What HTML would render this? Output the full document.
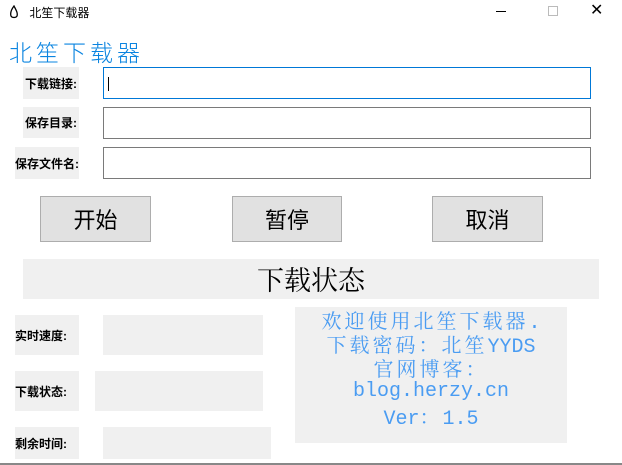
<!DOCTYPE html>
<html><head><meta charset="utf-8"><style>
body{margin:0;width:622px;height:465px;background:#fff;position:relative;overflow:hidden;font-family:"Liberation Sans","Noto Sans CJK SC",sans-serif;}
.a{position:absolute;box-sizing:border-box;}
.lab{background:#f0f0f0;font-weight:bold;font-size:12px;display:flex;align-items:center;justify-content:center;color:#000;}
.inp{border:1px solid #7a7a7a;background:#fff;}
.btn{background:#e1e1e1;border:1px solid #adadad;font-size:22px;display:flex;align-items:center;justify-content:center;}
.box{background:#f0f0f0;}
.c{font-family:"Noto Serif CJK SC",serif;letter-spacing:3px;}
.ln{height:24px;line-height:24px;overflow:visible;}
</style></head><body>
<div class="a" style="left:8px;top:4px;font-size:12px;">
<svg width="12" height="14" viewBox="0 0 12 14" style="vertical-align:-2px"><path d="M6 1 C3 5 2 8 3 11 C4 13 8 13 9 11 C10 8 8 5 6 1Z" fill="none" stroke="#000" stroke-width="1.3"/></svg>
<span style="margin-left:6px">北笙下载器</span></div>
<div class="a" style="left:496px;top:11px;width:10px;height:1px;background:#000"></div>
<div class="a" style="left:548px;top:6px;width:10px;height:10px;border:1px solid #bbb"></div>
<div class="a" style="left:590px;top:0px;font-size:16px;line-height:22px;">✕</div>
<div class="a" style="left:9px;top:34px;font-size:23px;color:#0a84e0;letter-spacing:4px;font-weight:300;">北笙下载器</div>
<div class="a lab" style="left:23px;top:67px;width:56px;height:32px;">下载链接:</div>
<div class="a lab" style="left:23px;top:107px;width:56px;height:31px;">保存目录:</div>
<div class="a lab" style="left:15px;top:147px;width:64px;height:32px;">保存文件名:</div>
<div class="a inp" style="left:103px;top:67px;width:488px;height:32px;border-color:#0078d7;"><div style="position:absolute;left:4px;top:9px;width:1px;height:14px;background:#000"></div></div>
<div class="a inp" style="left:103px;top:107px;width:488px;height:32px;"></div>
<div class="a inp" style="left:103px;top:147px;width:488px;height:32px;"></div>
<div class="a btn" style="left:40px;top:196px;width:111px;height:46px;">开始</div>
<div class="a btn" style="left:232px;top:196px;width:110px;height:46px;">暂停</div>
<div class="a btn" style="left:432px;top:196px;width:111px;height:46px;">取消</div>
<div class="a" style="left:23px;top:259px;width:576px;height:40px;background:#f0f0f0;font-size:27px;text-align:center;line-height:40px;font-family:'Noto Serif CJK SC',serif;">下载状态</div>
<div class="a lab" style="left:15px;top:315px;width:64px;height:40px;justify-content:flex-start;">实时速度:</div>
<div class="a lab" style="left:15px;top:371px;width:64px;height:40px;justify-content:flex-start;">下载状态:</div>
<div class="a lab" style="left:15px;top:427px;width:64px;height:32px;justify-content:flex-start;">剩余时间:</div>
<div class="a box" style="left:103px;top:315px;width:160px;height:40px;"></div>
<div class="a box" style="left:95px;top:371px;width:168px;height:40px;"></div>
<div class="a box" style="left:103px;top:427px;width:168px;height:32px;"></div>
<div class="a box" style="left:295px;top:307px;width:272px;height:136px;color:#4a9cf2;font-family:'Liberation Mono','Noto Serif CJK SC',serif;font-size:20px;text-align:center;padding-top:1px;white-space:nowrap;">
<div class="ln"><span class="c">欢迎使用北笙下载器</span>.</div>
<div class="ln"><span class="c">下载密码：北笙</span>YYDS</div>
<div class="ln"><span class="c">官网博客：</span></div>
<div class="ln">blog.herzy.cn</div>
<div class="ln">Ver<span class="c">：</span>1.5</div>
</div>
<div class="a" style="left:0;top:463px;width:622px;height:2px;background:#888"></div>
</body></html>
